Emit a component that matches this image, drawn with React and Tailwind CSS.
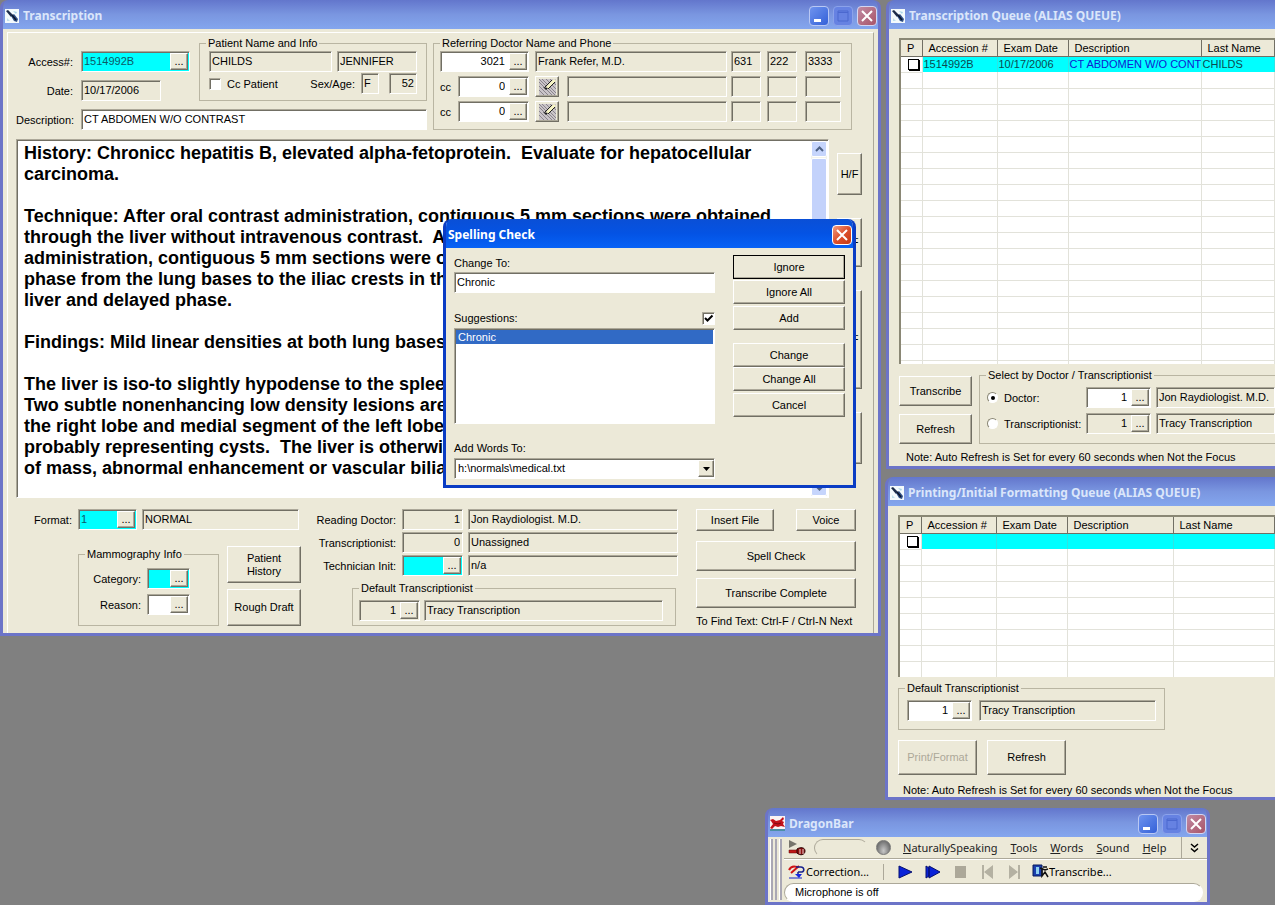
import React, { useState } from 'react';
import clsx from 'clsx';

const sunken = 'border border-t-[#aca899] border-l-[#aca899] border-r-white border-b-white shadow-[inset_1px_1px_0_#716f64]';
const raised = 'border border-t-white border-l-white border-r-[#716f64] border-b-[#716f64] shadow-[inset_-1px_-1px_0_#aca899]';

const REPORT = `History: Chronicc hepatitis B, elevated alpha-fetoprotein.  Evaluate for hepatocellular
carcinoma.

Technique: After oral contrast administration, contiguous 5 mm sections were obtained
through the liver without intravenous contrast.  After intravenous
administration, contiguous 5 mm sections were obtained in arterial
phase from the lung bases to the iliac crests in the portal phase,
liver and delayed phase.

Findings: Mild linear densities at both lung bases.

The liver is iso-to slightly hypodense to the spleen.
Two subtle nonenhancing low density lesions are seen in
the right lobe and medial segment of the left lobe,
probably representing cysts.  The liver is otherwise free
of mass, abnormal enhancement or vascular biliary change.`;

const PenIcon = () => (
  <svg width="14" height="14" viewBox="0 0 14 14" className="shrink-0">
    <rect width="14" height="14" fill="#f4fafc" />
    <path d="M1 2l2-1 5 5-2 2z" fill="#1d2c4a" />
    <path d="M6 7l3-2 4 5-1 3-3-1z" fill="#2f4f86" />
    <path d="M7 6l4 5" stroke="#0c1528" strokeWidth="1.5" />
    <path d="M8 2l4 1-1 2z" fill="#a8d4e6" />
    <path d="M2 9l3 3H2z" fill="#bfe0ec" />
  </svg>
);

const DragonIcon = () => (
  <svg width="15" height="15" viewBox="0 0 15 15" className="shrink-0">
    <rect width="15" height="15" fill="#fbf3f3" />
    <path d="M0 13h15v2H0z" fill="#4a8fa6" />
    <path d="M0 4l3-1 3 2 4-1 3-3 1 2-2 2 2 1-1 2 2 3-4-1-3 1-3-1-3 3-2-1 3-4-2-3z" fill="#c3121b" />
    <path d="M4 7l4 1 3-1" stroke="#7c0a10" fill="none" />
  </svg>
);

const CaptionButton = ({ kind, active }) => (
  <button
    aria-label={kind}
    className={clsx(
      'flex size-5 items-center justify-center rounded-sm border',
      kind === 'Close' && active && 'border-white bg-linear-to-br from-[#f09a7e] via-[#dd4f2a] to-[#c43a14]',
      kind === 'Close' && !active && 'border-[#d3d6f2] bg-linear-to-br from-[#c08aa4] to-[#a85468]',
      kind === 'Minimize' && 'border-[#b9c8f4] bg-linear-to-br from-[#6f93ee] to-[#3460d8]',
      kind === 'Maximize' && 'border-[#8ba2ea] bg-[#6682e2]'
    )}
  >
    <svg width="14" height="14" viewBox="0 0 14 14">
      {kind === 'Close' && <path d="M2 2l10 10M12 2L2 12" stroke="#fff" strokeWidth="2" />}
      {kind === 'Minimize' && <path d="M2 10h7v3H2z" fill="#fff" />}
      {kind === 'Maximize' && <path d="M2 2h10v10H2zM2 3.5h10" stroke="#4b68cf" fill="none" />}
    </svg>
  </button>
);

const Win = ({ title, icon, buttons = [], active, cut, className, children }) => (
  <section
    className={clsx(
      'absolute flex flex-col overflow-hidden border-b-3 border-l-3 rounded-tl-lg',
      active ? 'border-[#0a3cc4]' : 'border-[#6c74c8]',
      !cut && 'rounded-tr-lg border-r-3',
      className
    )}
  >
    <header
      className={clsx(
        '-mx-[3px] flex h-[29px] items-center gap-1 pr-1 pl-[5px] pt-0.5',
        active
          ? 'bg-linear-to-b from-[#0a4fd6] via-[#0453e4] to-[#0762f6]'
          : 'bg-linear-to-b from-[#6376cc] via-[#7a96e0] to-[#84a6ee]'
      )}
    >
      {icon}
      <h2
        className={clsx(
          "flex-1 truncate font-['Noto_Sans',sans-serif] text-[12px] font-bold leading-5",
          active ? 'text-white' : 'text-[#dbe6fa]'
        )}
      >
        {title}
      </h2>
      {buttons.map((kind) => (
        <CaptionButton key={kind} kind={kind} active={active} />
      ))}
    </header>
    <div className="flex-1 bg-[#ece9d8]">{children}</div>
  </section>
);

const Btn = ({ className, children, ...rest }) => (
  <button className={clsx('bg-[#ece9d8] text-center leading-[13px] disabled:text-[#aca899]', raised, className)} {...rest}>
    {children}
  </button>
);

// read-only value box
const Field = ({ value = '', label, id, right, className }) => (
  <input
    readOnly
    id={id}
    aria-label={label}
    value={value}
    className={clsx('h-[21px] min-w-0 bg-[#ece9d8] px-0.5 pb-0.5 outline-none', sunken, right && 'text-right', className)}
  />
);

// value box with the "..." picker button
const Lookup = ({ value = '', label, id, right, tone = 'bg-white', className }) => (
  <div className={clsx('flex h-[21px] shrink-0 p-px', sunken, tone, className)}>
    <input
      id={id}
      aria-label={label}
      defaultValue={value}
      className={clsx('w-0 min-w-0 flex-1 bg-transparent px-px pb-px outline-none', right && 'pr-1 text-right', tone === 'bg-[#00ffff]' && 'text-[#0c5a66]')}
    />
    <Btn className="w-[18px] shrink-0" aria-label={`Browse ${label}`}>
      ...
    </Btn>
  </div>
);

const Group = ({ title, className, cut, children }) => (
  <fieldset className={clsx('min-w-0 border border-[#b9b5a2]', cut && 'border-r-0', className)}>
    <legend className="ml-1.5 h-4 px-0.5 leading-4">{title}</legend>
    {children}
  </fieldset>
);

const Label = ({ htmlFor, className, children }) => (
  <label htmlFor={htmlFor} className={clsx('shrink-0 whitespace-nowrap', className)}>
    {children}
  </label>
);

const BrushIcon = () => (
  <svg width="17" height="16" viewBox="0 0 17 16" className="shrink-0">
    <rect width="17" height="16" fill="#c9c4c8" />
    <path d="M0 3l13 13M0 7l9 9M0 11l5 5M0 0l16 16M3 0l14 14M7 0l10 10M11 0l6 6" stroke="#8a848c" />
    <path d="M8 9l8-8" stroke="#f8f6c4" strokeWidth="3" />
    <path d="M6 8l7-7M9 10l7-7" stroke="#222" />
    <path d="M4 8l3 3 2-2z" fill="#1c1c1c" />
  </svg>
);

const Phone = ({ parts }) => (
  <div className="flex gap-1.5">
    <Field label="Area code" value={parts[0]} className="w-[30px]" />
    <Field label="Exchange" value={parts[1]} className="w-[30px]" />
    <Field label="Number" value={parts[2]} className="ml-0.5 w-9" />
  </div>
);

const CcRow = ({ n }) => (
  <div className="flex items-center gap-1">
    <Label htmlFor={`cc${n}`} className="w-3.5">cc</Label>
    <Lookup id={`cc${n}`} label={`cc ${n}`} value="0" right className="w-[71px]" />
    <Btn aria-label={`Clear cc ${n}`} className="ml-0.5 flex h-[21px] w-6 items-center justify-center">
      <BrushIcon />
    </Btn>
    <Field label={`cc ${n} name`} className="ml-1 flex-1" />
    <Phone parts={['', '', '']} />
  </div>
);

const ScrollArrow = ({ up }) => (
  <button aria-label={up ? 'Scroll up' : 'Scroll down'} className="flex h-4 items-center justify-center rounded-xs border border-white bg-[#c6d5fc]">
    <svg width="9" height="6" viewBox="0 0 9 6">
      <path d={up ? 'M1 5l3.5-3.5L8 5' : 'M1 1l3.5 3.5L8 1'} stroke="#4d6185" strokeWidth="2" fill="none" />
    </svg>
  </button>
);

const TranscriptionWindow = () => (
  <Win title="Transcription" icon={<PenIcon />} buttons={['Minimize', 'Maximize', 'Close']} className="top-0 left-0 w-[881px]">
    <div className="p-1 pt-[3px] pb-0">
      <div className="border border-b-0 border-white border-r-[#aca899] pt-0.5 pr-[11px] pb-[5px] pl-2">
        <div className="flex gap-1.5 pr-2.5">
          <div className="flex min-w-0 flex-1 flex-col gap-2">
            <div className="flex gap-[9px]">
              <div className="flex shrink-0 flex-col gap-2 pt-4">
                <div className="flex items-center gap-2">
                  <Label htmlFor="access" className="w-[57px] text-right">Access#:</Label>
                  <Lookup id="access" label="Access#" value="1514992B" tone="bg-[#00ffff]" className="w-[109px]" />
                </div>
                <div className="flex items-center gap-2">
                  <Label htmlFor="date" className="w-[57px] text-right">Date:</Label>
                  <Field id="date" value="10/17/2006" className="w-20" />
                </div>
              </div>
              <Group title="Patient Name and Info" className="flex-1">
                <div className="flex flex-col gap-px px-[9px]">
                  <div className="flex gap-[5px]">
                    <Field label="Last name" value="CHILDS" className="flex-1" />
                    <Field label="First name" value="JENNIFER" className="w-20" />
                  </div>
                  <div className="flex items-center">
                    <input id="ccPatient" type="checkbox" className={clsx('size-3 appearance-none bg-white', sunken)} />
                    <Label htmlFor="ccPatient" className="ml-1.5 flex-1">Cc Patient</Label>
                    <Label htmlFor="sex" className="mr-1.5">Sex/Age:</Label>
                    <Field id="sex" value="F" className="mr-2.5 w-[18px]" />
                    <Field label="Age" value="52" right className="w-7" />
                  </div>
                </div>
              </Group>
            </div>
            <div className="flex items-center gap-2">
              <Label htmlFor="description" className="w-[57px] text-right">Description:</Label>
              <input
                id="description"
                defaultValue="CT ABDOMEN W/O CONTRAST"
                className={clsx('h-[21px] min-w-0 flex-1 bg-white px-0.5 pb-0.5 outline-none', sunken)}
              />
            </div>
          </div>
          <Group title="Referring Doctor Name and Phone" className="w-[419px] shrink-0">
            <div className="flex flex-col gap-1 pr-2.5 pb-1.5 pl-1.5">
              <div className="flex gap-1">
                <Lookup label="Referring doctor" value="3021" right className="w-[89px]" />
                <Field label="Referring doctor name" value="Frank Refer, M.D." className="ml-0.5 flex-1" />
                <Phone parts={['631', '222', '3333']} />
              </div>
              <CcRow n={1} />
              <CcRow n={2} />
            </div>
          </Group>
        </div>

        <div className="mt-[9px] flex h-[359px] gap-2">
          <div className={clsx('flex flex-1 bg-white p-px', sunken)}>
            <textarea
              aria-label="Report text"
              wrap="off"
              spellCheck={false}
              defaultValue={REPORT}
              className="flex-1 resize-none overflow-hidden bg-transparent px-1.5 py-0.5 text-[18px] leading-[21px] font-bold outline-none"
            />
            <div className="flex w-4 flex-col bg-[#f3f3ec]">
              <ScrollArrow up />
              <div className="my-px flex-1 rounded-xs border border-white bg-[#c3d2fb]" />
              <ScrollArrow />
            </div>
          </div>
          <div className="flex w-[25px] flex-col gap-[23px] pt-3.5">
            <Btn className="h-[42px]">H/F</Btn>
            <Btn className="h-[49px]">H/F</Btn>
            <Btn className="h-[99px]">H/F</Btn>
            <Btn className="h-[52px]" aria-label="More" />
          </div>
        </div>

        <div className="mt-[11px] flex">
          <div className="flex flex-col gap-4">
            <div className="flex items-center">
              <Label htmlFor="format" className="mr-1.5 w-14 text-right">Format:</Label>
              <Lookup id="format" label="Format" value="1" tone="bg-[#00ffff]" className="w-[59px]" />
              <Field label="Format name" value="NORMAL" className="ml-[5px] w-[157px]" />
            </div>
            <div className="ml-[62px] flex gap-2">
              <Group title="Mammography Info" className="w-[141px]">
                <div className="flex flex-col gap-[5px] pt-1.5">
                  <div className="flex items-center gap-1.5">
                    <Label htmlFor="category" className="w-[62px] text-right">Category:</Label>
                    <Lookup id="category" label="Category" tone="bg-[#00ffff]" className="w-[43px]" />
                  </div>
                  <div className="flex items-center gap-1.5">
                    <Label htmlFor="reason" className="w-[62px] text-right">Reason:</Label>
                    <Lookup id="reason" label="Reason" className="w-[43px]" />
                  </div>
                </div>
              </Group>
              <div className="flex w-[74px] flex-col gap-1.5">
                <Btn className="h-[37px] px-3">Patient History</Btn>
                <Btn className="h-[37px]">Rough Draft</Btn>
              </div>
            </div>
          </div>

          <div className="flex flex-1 flex-col gap-0.5">
            <div className="flex items-center">
              <Label htmlFor="reading" className="mr-1.5 w-[95px] text-right">Reading Doctor:</Label>
              <Field id="reading" value="1" right className="w-[61px]" />
              <Field label="Reading doctor name" value="Jon Raydiologist. M.D." className="ml-[5px] flex-1" />
            </div>
            <div className="flex items-center">
              <Label htmlFor="transcriptionist" className="mr-1.5 w-[95px] text-right">Transcriptionist:</Label>
              <Field id="transcriptionist" value="0" right className="w-[61px]" />
              <Field label="Transcriptionist name" value="Unassigned" className="ml-[5px] flex-1" />
            </div>
            <div className="flex items-center">
              <Label htmlFor="technician" className="mr-1.5 w-[95px] text-right">Technician Init:</Label>
              <Lookup id="technician" label="Technician Init" tone="bg-[#00ffff]" className="w-[61px]" />
              <Field label="Technician name" value="n/a" className="ml-[5px] flex-1" />
            </div>
            <Group title="Default Transcriptionist" className="mt-0.5 mr-0.5 ml-[51px]">
              <div className="flex gap-1 pt-1 pr-3 pb-1 pl-1.5">
                <Lookup label="Default transcriptionist" value="1" right tone="bg-[#ece9d8]" className="w-[61px]" />
                <Field label="Default transcriptionist name" value="Tracy Transcription" className="flex-1" />
              </div>
            </Group>
          </div>

          <div className="mr-1.5 ml-[18px] flex w-40 flex-col">
            <div className="flex justify-between">
              <Btn className="h-[22px] w-[78px]">Insert File</Btn>
              <Btn className="h-[22px] w-[60px]">Voice</Btn>
            </div>
            <Btn className="mt-2.5 h-[30px]">Spell Check</Btn>
            <Btn className="mt-[7px] h-[30px]">Transcribe Complete</Btn>
            <p className="mt-1.5 whitespace-nowrap">To Find Text: Ctrl-F / Ctrl-N Next</p>
          </div>
        </div>
      </div>
    </div>
  </Win>
);

const SpellingDialog = () => {
  const [word, setWord] = useState('Chronic');

  return (
    <Win title="Spelling Check" buttons={['Close']} active className="top-[219px] left-[443px] w-[413px]">
      <div className="flex gap-[18px] px-2 pt-[7px] pb-1.5">
        <div className="flex flex-1 flex-col">
          <label htmlFor="changeTo" className="leading-4">Change To:</label>
          <input
            id="changeTo"
            value={word}
            onChange={(e) => setWord(e.target.value)}
            className={clsx('mt-px h-[21px] bg-white px-0.5 pb-0.5 outline-none', sunken)}
          />
          <div className="mt-[17px] flex items-center justify-between">
            <label htmlFor="showSuggestions" className="leading-4">Suggestions:</label>
            <span className="grid">
              <input
                id="showSuggestions"
                type="checkbox"
                defaultChecked
                className={clsx('peer col-start-1 row-start-1 size-[13px] appearance-none bg-white', sunken)}
              />
              <svg viewBox="0 0 13 13" className="pointer-events-none invisible col-start-1 row-start-1 size-[13px] peer-checked:visible">
                <path d="M3 6l2.500 2.500L10.500 3.500" stroke="#000" strokeWidth="2" fill="none" />
              </svg>
            </span>
          </div>
          <ul className={clsx('mt-0.5 h-24 bg-white p-px', sunken)}>
            <li className="h-3.5 bg-[#316ac5] px-0.5 leading-[14px] text-white">Chronic</li>
          </ul>
          <label htmlFor="dictionary" className="mt-4 leading-4">Add Words To:</label>
          <div className={clsx('relative mt-0.5 h-[21px] bg-white', sunken)}>
            <select id="dictionary" className="h-full w-full appearance-none bg-transparent px-[3px] pb-px outline-none">
              <option>h:\normals\medical.txt</option>
            </select>
            <span className={clsx('pointer-events-none absolute inset-y-px right-0 flex w-4 items-center justify-center bg-[#ece9d8]', raised)}>
              <svg width="7" height="4" viewBox="0 0 7 4">
                <path d="M0 0h7L3.500 4z" />
              </svg>
            </span>
          </div>
        </div>
        <div className="flex w-28 flex-col">
          <Btn className="h-6 outline outline-black -outline-offset-1">Ignore</Btn>
          <Btn className="mt-px h-6">Ignore All</Btn>
          <Btn className="mt-0.5 h-6">Add</Btn>
          <Btn className="mt-[13px] h-6">Change</Btn>
          <Btn className="h-6">Change All</Btn>
          <Btn className="mt-0.5 h-6">Cancel</Btn>
        </div>
      </div>
    </Win>
  );
};

const QueueTable = ({ label, widths, row, blanks, className }) => (
  <div className={clsx('overflow-hidden border-t-2 border-l-2 border-[#8a8775] bg-white', className)}>
    <table aria-label={label} className="w-full table-fixed border-collapse">
      <colgroup>
        {widths.map((w, i) => (
          <col key={i} className={w} />
        ))}
      </colgroup>
      <thead>
        <tr className="h-4 bg-[#ece9d8]">
          {['P', 'Accession #', 'Exam Date', 'Description', 'Last Name'].map((name) => (
            <th key={name} className="h-4 border-r border-b border-[#716f64] px-1.5 py-0 text-left leading-[14px] font-normal whitespace-nowrap">
              {name}
            </th>
          ))}
        </tr>
      </thead>
      <tbody>
        <tr className="h-4">
          <td className="border-r border-b border-[#e2e2da] p-0">
            <input
              type="checkbox"
              aria-label="Print"
              className="ml-[7px] block size-[11px] appearance-none border border-black bg-white shadow-[1px_1px_0_#000]"
            />
          </td>
          {row.map((text, i) => (
            <td
              key={i}
              className={clsx(
                'overflow-hidden border-r border-[#2fe4e4] bg-[#00ffff] px-px py-0 leading-[15px] whitespace-nowrap',
                i === 2 ? 'text-[#1020d0]' : 'text-[#0c4a50]'
              )}
            >
              {text}
            </td>
          ))}
        </tr>
        {Array.from({ length: blanks }, (_, r) => (
          <tr key={r} className="h-4">
            {widths.map((_, c) => (
              <td key={c} className="border-r border-b border-[#e2e2da] p-0" />
            ))}
          </tr>
        ))}
      </tbody>
    </table>
  </div>
);

const radio =
  'mr-1.5 flex size-[11px] shrink-0 appearance-none items-center justify-center rounded-full border border-[#8a8775] border-r-white border-b-white bg-white checked:before:size-1 checked:before:rounded-full checked:before:bg-black';

const QueueWindow = () => (
  <Win title="Transcription Queue (ALIAS QUEUE)" icon={<PenIcon />} cut className="top-0 right-0 left-[886px]">
    <div className="pt-[9px] pb-0.5 pl-2.5">
      <QueueTable
        label="Transcription queue"
        widths={['w-[21px]', 'w-[75px]', 'w-[71px]', 'w-[133px]', '']}
        row={['1514992B', '10/17/2006', 'CT ABDOMEN W/O CONT', 'CHILDS']}
        blanks={19}
        className="h-[326px]"
      />
      <div className="mt-[3px] flex gap-[7px]">
        <div className="flex w-[73px] flex-col gap-2 pt-[9px]">
          <Btn className="h-[30px]">Transcribe</Btn>
          <Btn className="h-[30px]">Refresh</Btn>
        </div>
        <Group title="Select by Doctor / Transcriptionist" cut className="flex-1">
          <div className="flex flex-col gap-[5px] pt-1 pb-2 pl-[7px]">
            <div className="flex items-center">
              <input id="byDoctor" type="radio" name="queueBy" defaultChecked className={radio} />
              <Label htmlFor="byDoctor" className="w-[82px]">Doctor:</Label>
              <Lookup label="Doctor" value="1" right className="w-[65px]" />
              <Field label="Doctor name" value="Jon Raydiologist. M.D." className="ml-[5px] flex-1" />
            </div>
            <div className="flex items-center">
              <input id="byTranscriptionist" type="radio" name="queueBy" className={radio} />
              <Label htmlFor="byTranscriptionist" className="w-[82px]">Transcriptionist:</Label>
              <Lookup label="Transcriptionist" value="1" right tone="bg-[#ece9d8]" className="w-[65px]" />
              <Field label="Queue transcriptionist name" value="Tracy Transcription" className="ml-[5px] flex-1" />
            </div>
          </div>
        </Group>
      </div>
      <p className="mt-1.5 pl-[7px]">Note: Auto Refresh is Set for every 60 seconds when Not the Focus</p>
    </div>
  </Win>
);

const PrintingWindow = () => (
  <Win title="Printing/Initial Formatting Queue (ALIAS QUEUE)" icon={<PenIcon />} cut className="top-[477px] right-0 left-[885px]">
    <div className="pt-[9px] pl-2.5">
      <QueueTable
        label="Printing queue"
        widths={['w-[21px]', 'w-[75px]', 'w-[71px]', 'w-[106px]', '']}
        row={['', '', '', '']}
        blanks={9}
        className="h-[162px]"
      />
      <Group title="Default Transcriptionist" className="mt-[3px] w-[267px]">
        <div className="flex gap-[7px] pt-1 pr-2 pb-2 pl-2">
          <Lookup label="Printing transcriptionist" value="1" right className="w-[65px]" />
          <Field label="Printing transcriptionist name" value="Tracy Transcription" className="flex-1" />
        </div>
      </Group>
      <div className="mt-2.5 flex gap-2.5">
        <Btn disabled className="h-[35px] w-[79px]">Print/Format</Btn>
        <Btn className="h-[35px] w-[79px]">Refresh</Btn>
      </div>
      <p className="mt-2 pl-[5px]">Note: Auto Refresh is Set for every 60 seconds when Not the Focus</p>
    </div>
  </Win>
);

const ToolIcon = ({ label, children }) => (
  <button aria-label={label} className="shrink-0">
    <svg width="16" height="14" viewBox="0 0 16 14">
      {children}
    </svg>
  </button>
);

const DragonBar = () => (
  <Win title="DragonBar" icon={<DragonIcon />} buttons={['Minimize', 'Maximize', 'Close']} className="top-[808px] left-[765px] w-[445px]">
    <div className="flex font-['Noto_Sans',sans-serif] text-[11px]">
      <div className="flex w-4 gap-0.5 px-0.5 py-0.5">
        <span className="flex-1 border-r-2 border-[#a9a7b4] bg-white" />
        <span className="flex-1 border-r-2 border-[#a9a7b4] bg-white" />
        <span className="flex-1 border-r-2 border-[#a9a7b4] bg-white" />
      </div>
      <div className="flex min-w-0 flex-1 flex-col">
        <div className="flex h-[22px] items-center border-b border-[#aca899]">
          <button aria-label="Microphone" className="ml-1 shrink-0">
            <svg width="18" height="16" viewBox="0 0 18 16">
              <path d="M1 0l8 4-8 4z" fill="#77756c" />
              <path d="M1 10h9v3H1z" fill="#c01818" stroke="#5c0808" strokeWidth="0.500" />
              <path d="M9 9c3-2 8-2 8 2s-5 5-8 2z" fill="#8c1010" stroke="#2c0404" />
              <path d="M12 9v5M15 9v5" stroke="#e8d0d0" />
            </svg>
          </button>
          <span className="ml-2 h-[18px] w-[54px] shrink-0 rounded-full border border-[#aca899] border-r-transparent border-b-transparent" />
          <span className="ml-2 size-[15px] shrink-0 rounded-full border border-[#777] bg-radial-[at_50%_75%] from-[#c8c8c8] to-[#505050]" />
          <nav className="ml-3 flex flex-1 gap-[13px] text-[#222]">
            <a href="#naturallyspeaking"><u>N</u>aturallySpeaking</a>
            <a href="#tools"><u>T</u>ools</a>
            <a href="#words"><u>W</u>ords</a>
            <a href="#sound"><u>S</u>ound</a>
            <a href="#help"><u>H</u>elp</a>
          </nav>
          <button aria-label="More" className="flex h-full w-[26px] items-center justify-center border-l border-[#aca899]">
            <svg width="9" height="10" viewBox="0 0 9 10">
              <path d="M1 1l3.500 3L8 1M1 5.500l3.500 3L8 5.500" stroke="#000" strokeWidth="1.500" fill="none" />
            </svg>
          </button>
        </div>
        <div className="flex h-6 items-center border-t border-white">
          <button className="ml-1 flex items-center">
            <svg width="18" height="16" viewBox="0 0 18 16">
              <path d="M1 6c2-4 5-4 8-3M3 9L11 2" stroke="#d01414" strokeWidth="2" fill="none" />
              <path d="M8 3h5c3 0 4 4 1 5h-4M10 8v3" stroke="#16208c" strokeWidth="1.500" fill="none" />
              <path d="M7 10h7l-3 4z" fill="#1626e0" />
              <path d="M1 14h13" stroke="#1626c8" />
            </svg>
            Correction...
          </button>
          <span className="mx-3.5 h-4 border-l border-[#aca899]" />
          <div className="flex gap-[11px]">
            <ToolIcon label="Play"><path d="M1 1l13 6-13 6z" fill="#0a22d8" stroke="#061070" /></ToolIcon>
            <ToolIcon label="Play that back"><path d="M1 1v12l3-2V3zM4 1l11 6-11 6z" fill="#0a22d8" stroke="#061070" /></ToolIcon>
            <ToolIcon label="Stop"><path d="M3 1h11v12H3z" fill="#aca899" /></ToolIcon>
            <ToolIcon label="Skip back"><path d="M3 0h2v14H3zM14 0v14L5 7z" fill="#b4b1a2" /></ToolIcon>
            <ToolIcon label="Skip forward"><path d="M12 0h2v14h-2zM3 0l9 7-9 7z" fill="#b4b1a2" /></ToolIcon>
          </div>
          <button className="ml-2.5 flex items-center">
            <svg width="17" height="16" viewBox="0 0 17 16">
              <path d="M1 1h9v11H1z" fill="#1a3fae" stroke="#071a5c" />
              <path d="M4 3h3v7H4z" fill="#8fd0f0" />
              <path d="M8 4l5 2 3-1M10 5v7l3-4 3 5M11 3h4" stroke="#111" strokeWidth="1.500" fill="none" />
            </svg>
            Transcribe...
          </button>
        </div>
        <p className="mr-1 h-[19px] rounded-full border border-[#aca899] border-r-white border-b-white bg-white pl-2.5 font-['Liberation_Sans',Arial,sans-serif] leading-[17px]">
          Microphone is off
        </p>
      </div>
    </div>
  </Win>
);

export default function App() {
  return (
    <main className="relative min-h-screen min-w-[1210px] overflow-hidden border-r-2 border-white bg-[#808080] font-['Liberation_Sans',Arial,sans-serif] text-[11px] leading-[14px] text-black">
      <TranscriptionWindow />
      <QueueWindow />
      <PrintingWindow />
      <DragonBar />
      <SpellingDialog />
    </main>
  );
}
